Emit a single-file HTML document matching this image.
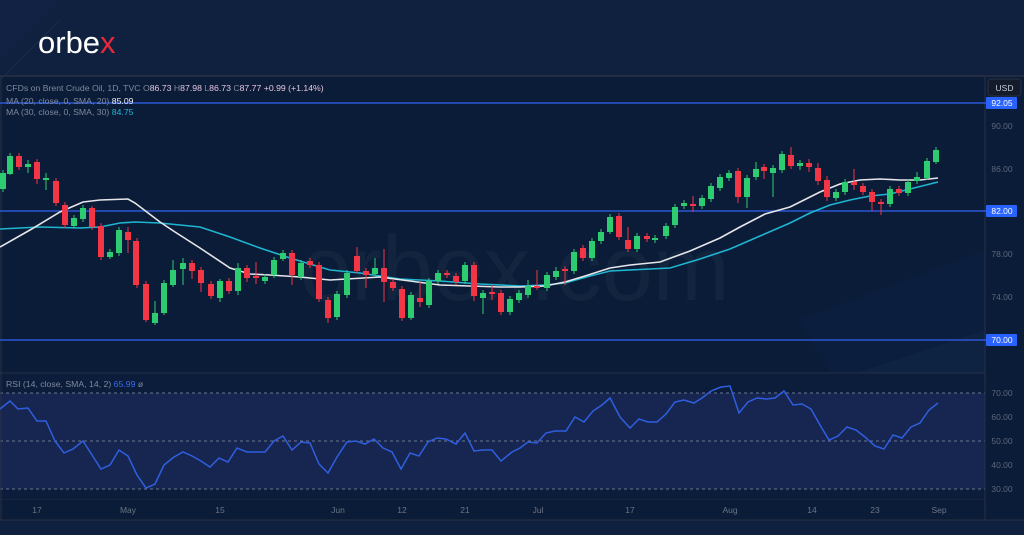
<!DOCTYPE html>
<html><head><meta charset="utf-8"><style>
html,body{margin:0;padding:0;width:1024px;height:535px;overflow:hidden;background:#0f1f3e;font-family:"Liberation Sans",sans-serif}
svg{position:absolute;left:0;top:0}
</style></head><body>
<svg width="1024" height="535" viewBox="0 0 1024 535" xmlns="http://www.w3.org/2000/svg">
<rect width="1024" height="535" fill="#10203f"/>
<polygon points="0,0 60,0 0,60" fill="#13244a" opacity="0.6"/>
<rect x="0" y="76" width="1024" height="444" fill="#0a1c37"/>
<line x1="0" y1="76" x2="1024" y2="76" fill="none" stroke="#2a3042" stroke-width="1.5"/>
<polygon points="800,320 985,250 985,372 830,372" fill="#0d2040" opacity="0.7"/>
<polygon points="860,372 985,330 985,500 880,500" fill="#142a4c" opacity="0.35"/>
<line x1="0" y1="80" x2="60" y2="20" stroke="#1a2c4d" stroke-width="1"/>
<text x="300" y="300" font-size="92" fill="#ffffff" fill-opacity="0.035" font-family="Liberation Sans, sans-serif">orbex.com</text>
<rect x="0" y="373" width="985" height="127" fill="#0b1d3b"/>
<rect x="0" y="393" width="985" height="96" fill="#172650"/>
<line x1="0" y1="373" x2="985" y2="373" stroke="#263048" stroke-width="1"/>
<g stroke="#6a7690" stroke-dasharray="3,3" stroke-width="1">
<line x1="0" y1="393" x2="985" y2="393"/><line x1="0" y1="441" x2="985" y2="441"/><line x1="0" y1="489" x2="985" y2="489"/>
</g>
<line x1="0" y1="500" x2="985" y2="500" stroke="#2a3042"/>
<rect x="0" y="500" width="1024" height="20" fill="#0a1c37"/>
<line x1="0" y1="520" x2="1024" y2="520" stroke="#2a3042"/>
<line x1="985" y1="76" x2="985" y2="520" stroke="#2a3042"/>
<line x1="1" y1="76" x2="1" y2="520" stroke="#2a3042"/>
<g stroke="#2b57d6" stroke-width="1.5">
<line x1="0" y1="103" x2="987" y2="103"/><line x1="0" y1="211" x2="987" y2="211"/><line x1="0" y1="340" x2="987" y2="340"/>
</g>
<polyline fill="none" stroke="#1fb5d0" stroke-width="1.6" points="0,229 40,227 80,228 100,227 120,223 135,222 160,223 200,227 230,237 260,248 290,258 310,264 330,270 360,273 400,279 440,281 480,284 520,286 545,285 565,283 590,276 610,271 650,269 670,268 700,259 730,249 760,236 790,223 810,213 830,205 850,200 870,196 890,194 910,189 938,182"/>
<polyline fill="none" stroke="#e6e6ea" stroke-width="1.6" points="0,247 30,230 60,212 83,202 100,200 128,199 135,203 160,222 175,232 200,248 230,268 250,274 270,275 300,277 330,280 380,277 410,281 440,285 470,286 500,287 520,287 545,286 565,282 585,276 610,268 630,265 660,262 690,251 720,238 740,227 765,214 790,207 800,202 820,192 840,184 860,180 880,179 900,180 920,180 938,178"/>
<g fill="#2ecc71" stroke="#2ecc71" stroke-width="1">
<path d="M3,170V192M10,153V175M28,160V173M46,173V190M74,215V228M83,205V222M110,249V259M119,227V256M155,301V325M164,280V315M173,260V287M183,258V285M220,279V302M238,263V295M265,274V284M274,257V278M283,250V261M301,260V280M337,291V320M347,270V298M375,258V276M411,292V320M429,278V308M438,270V284M465,262V284M483,290V314M510,296V315M519,290V303M528,280V298M547,272V291M556,267V280M574,249V274M592,238V261M601,229V244M610,214V234M637,233V252M655,235V243M666,223V239M675,204V228M684,200V209M702,195V209M711,183V202M720,174V191M729,170V181M747,175V208M756,162V180M773,165V197M782,151V173M800,160V170M836,189V201M845,179V195M890,186V207M908,179V196M917,172V184M927,158V180M936,147V164"/>
<path stroke="none" d="M0,173h6v16h-6zM7,156h6v18h-6zM25,164h6v3h-6zM43,178h6v2h-6zM71,218h6v8h-6zM80,208h6v11h-6zM107,252h6v5h-6zM116,230h6v23h-6zM152,313h6v10h-6zM161,283h6v30h-6zM170,270h6v15h-6zM180,263h6v6h-6zM217,281h6v17h-6zM235,268h6v23h-6zM262,277h6v4h-6zM271,260h6v15h-6zM280,253h6v6h-6zM298,263h6v14h-6zM334,294h6v23h-6zM344,273h6v22h-6zM372,268h6v6h-6zM408,295h6v23h-6zM426,281h6v24h-6zM435,273h6v8h-6zM462,265h6v16h-6zM480,293h6v5h-6zM507,299h6v13h-6zM516,293h6v7h-6zM525,286h6v9h-6zM544,275h6v13h-6zM553,271h6v6h-6zM571,252h6v19h-6zM589,241h6v17h-6zM598,232h6v9h-6zM607,217h6v15h-6zM634,236h6v13h-6zM652,238h6v2h-6zM663,226h6v10h-6zM672,207h6v18h-6zM681,203h6v3h-6zM699,198h6v8h-6zM708,186h6v13h-6zM717,177h6v11h-6zM726,173h6v5h-6zM744,178h6v19h-6zM753,169h6v8h-6zM770,168h6v5h-6zM779,154h6v16h-6zM797,163h6v3h-6zM833,192h6v6h-6zM842,182h6v10h-6zM887,189h6v15h-6zM905,182h6v11h-6zM914,177h6v4h-6zM924,161h6v17h-6zM933,150h6v12h-6z"/>
</g>
<g fill="#f23645" stroke="#f23645" stroke-width="1">
<path d="M19,153V170M37,159V184M56,178V206M65,202V228M92,206V230M101,223V260M128,227V253M137,238V288M146,281V322M192,260V279M201,267V292M211,281V299M229,278V294M247,265V282M256,262V284M292,250V285M310,258V268M319,262V302M328,297V323M357,247V273M366,268V288M384,249V302M393,279V291M402,286V321M420,282V307M447,270V278M456,273V285M474,262V301M492,285V300M501,290V315M537,270V290M565,266V285M583,245V261M619,213V240M628,227V252M647,233V242M693,196V212M738,168V203M764,164V179M791,147V169M809,159V172M818,163V185M827,176V201M854,169V190M863,183V195M872,189V211M881,199V215M899,186V196"/>
<path stroke="none" d="M16,156h6v11h-6zM34,162h6v17h-6zM53,181h6v22h-6zM62,205h6v20h-6zM89,208h6v19h-6zM98,226h6v31h-6zM125,232h6v8h-6zM133,241h6v44h-6zM143,284h6v36h-6zM189,263h6v8h-6zM198,270h6v13h-6zM208,284h6v12h-6zM226,281h6v10h-6zM244,268h6v10h-6zM253,276h6v2h-6zM289,253h6v22h-6zM307,261h6v4h-6zM316,265h6v34h-6zM325,300h6v18h-6zM354,256h6v15h-6zM363,271h6v4h-6zM381,268h6v14h-6zM390,282h6v6h-6zM399,289h6v29h-6zM417,298h6v4h-6zM444,273h6v2h-6zM453,276h6v6h-6zM471,265h6v31h-6zM489,292h6v2h-6zM498,293h6v19h-6zM534,286h6v2h-6zM562,269h6v2h-6zM580,248h6v10h-6zM616,216h6v21h-6zM625,240h6v9h-6zM644,236h6v3h-6zM690,204h6v2h-6zM735,171h6v26h-6zM761,167h6v4h-6zM788,155h6v11h-6zM806,163h6v4h-6zM815,168h6v13h-6zM824,180h6v17h-6zM851,182h6v3h-6zM860,186h6v6h-6zM869,192h6v10h-6zM878,202h6v2h-6zM896,189h6v4h-6z"/>
</g>
<polyline fill="none" stroke="#2f5fe0" stroke-width="1.5" points="0,409 10,401 18,409 28,408 37,421 46,421 55,441 64,453 73,449 83,441 92,455 101,469 110,465 119,450 128,456 137,475 146,488 155,484 164,465 174,457 183,452 192,456 201,461 210,467 219,458 228,462 237,448 247,452 256,452 265,452 274,441 283,436 292,450 301,442 310,443 319,464 328,473 337,457 347,442 356,441 365,444 374,439 383,448 392,452 401,469 410,453 419,456 428,442 437,438 446,439 456,444 465,433 474,451 483,450 492,450 501,461 512,452 520,448 528,442 537,443 546,433 555,431 566,431 575,417 584,422 593,411 602,405 610,398 620,417 630,428 639,419 648,422 657,422 666,414 675,402 684,400 694,403 702,398 711,391 721,387 730,386 739,413 748,402 757,398 766,399 775,398 784,391 793,405 802,404 811,409 820,425 829,440 838,436 847,427 856,430 865,437 875,446 884,449 893,435 902,438 911,427 920,423 929,410 938,403"/>
<g font-size="8.7" fill="#7f889c">
<text x="6" y="91">CFDs on Brent Crude Oil, 1D, TVC  O<tspan fill="#e7c6dc">86.73</tspan>  H<tspan fill="#e7c6dc">87.98</tspan>  L<tspan fill="#e7c6dc">86.73</tspan>  C<tspan fill="#e7c6dc">87.77</tspan>  <tspan fill="#e7c6dc">+0.99 (+1.14%)</tspan></text>
<text x="6" y="104">MA (20, close, 0, SMA, 20)  <tspan fill="#f0f0f0">85.09</tspan></text>
<text x="6" y="115">MA (30, close, 0, SMA, 30)  <tspan fill="#22b5d3">84.75</tspan></text>
<text x="6" y="387">RSI (14, close, SMA, 14, 2)  <tspan fill="#3a6cf0">65.99</tspan>  ø</text>
</g>
<rect x="988" y="79" width="33" height="17" rx="3" fill="#141b2b" stroke="#2a3042"/>
<text x="1004.5" y="91" font-size="8.5" fill="#c8ccd6" text-anchor="middle">USD</text>
<g fill="#2962ff"><rect x="986" y="97" width="31" height="12" rx="1"/><rect x="986" y="205" width="31" height="12" rx="1"/><rect x="986" y="334" width="31" height="12" rx="1"/></g>
<g font-size="8.5" fill="#ffffff" text-anchor="middle"><text x="1002" y="106">92.05</text><text x="1002" y="214">82.00</text><text x="1002" y="343">70.00</text></g>
<g font-size="8.5" fill="#5d667a" text-anchor="middle"><text x="1002" y="129">90.00</text><text x="1002" y="172">86.00</text><text x="1002" y="257">78.00</text><text x="1002" y="300">74.00</text>
<text x="1002" y="396">70.00</text><text x="1002" y="420">60.00</text><text x="1002" y="444">50.00</text><text x="1002" y="468">40.00</text><text x="1002" y="492">30.00</text></g>
<g font-size="8.5" fill="#6b7488" text-anchor="middle">
<text x="37" y="513">17</text><text x="128" y="513">May</text><text x="220" y="513">15</text><text x="338" y="513">Jun</text><text x="402" y="513">12</text><text x="465" y="513">21</text><text x="538" y="513">Jul</text><text x="630" y="513">17</text><text x="730" y="513">Aug</text><text x="812" y="513">14</text><text x="875" y="513">23</text><text x="939" y="513">Sep</text>
</g>
<text x="38" y="53" font-size="31" fill="#ffffff" font-family="Liberation Sans, sans-serif">orbe<tspan fill="#e5293a">x</tspan></text>
</svg>
</body></html>
